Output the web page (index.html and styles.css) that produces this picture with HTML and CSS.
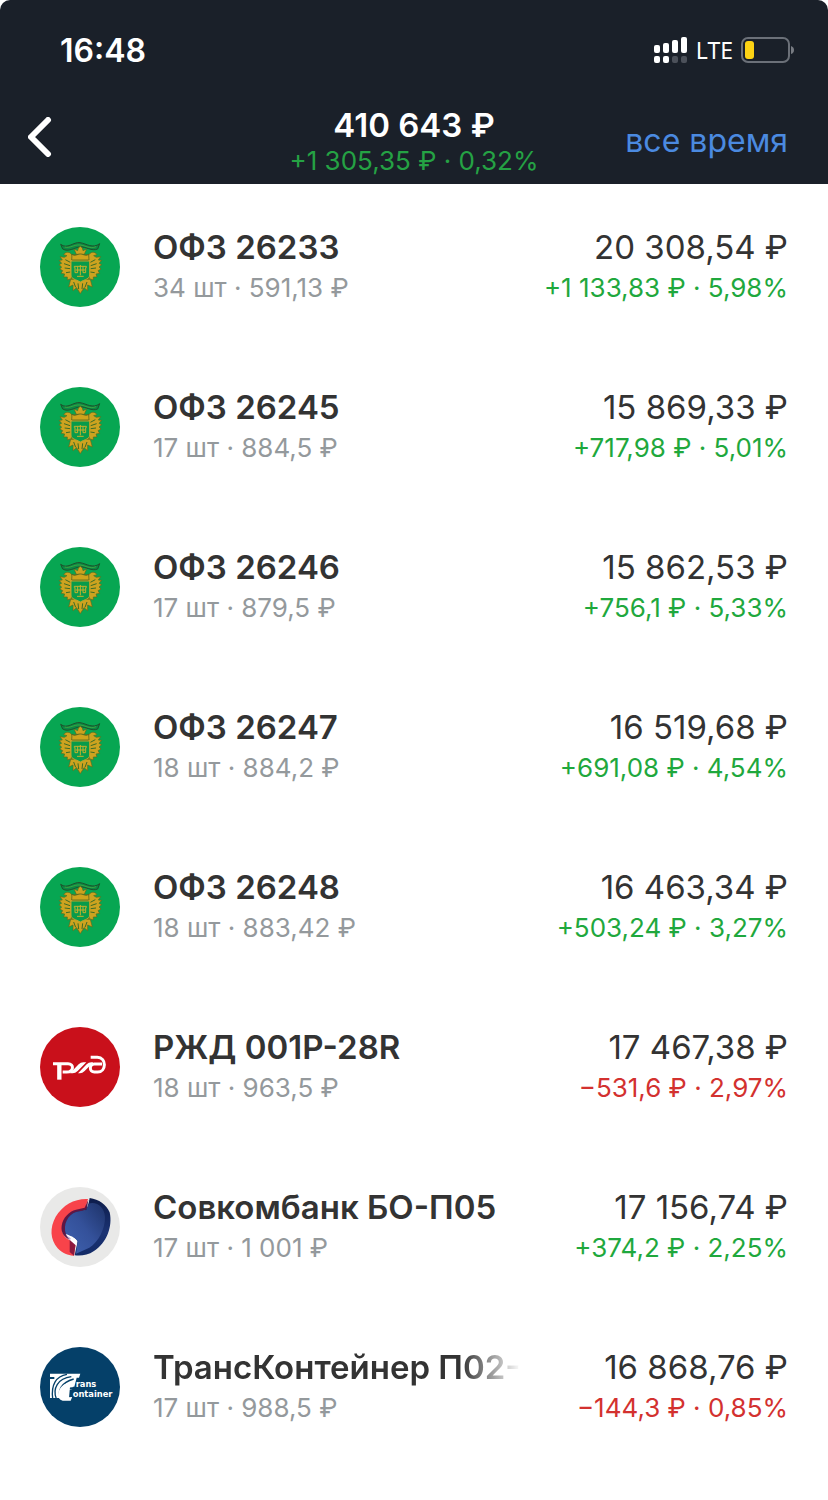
FILE: index.html
```html
<!DOCTYPE html>
<html lang="ru">
<head>
<meta charset="utf-8">
<meta name="viewport" content="width=device-width, initial-scale=1">
<title>Портфель</title>
<link rel="stylesheet" href="styles.css">
</head>
<body>
<svg class="defs" aria-hidden="true">
  <symbol id="logo-ofz" viewBox="30 30 240 240">
    <circle cx="150" cy="150" r="120" fill="#07a652"/>
    <path d="M92 82C112 98 130 74 150 77S188 96 209 80L203 96C185 104 168 88 150 90S116 106 98 96Z" fill="#0a8a45" stroke="#1f4f2a" stroke-width="3"/>
    <path d="M104 90C120 95 132 82 150 84S180 97 198 89" fill="none" stroke="#58b03c" stroke-width="2"/>
    <path d="M110 112H192L196 170 180 190 168 212 151 226 134 212 122 190 106 170Z" fill="#5d7a22"/>
    <g fill="#cda31f" stroke="#5c6a1d" stroke-width="2">
      <path d="M128 118C122 102 106 103 101 113L111 116 103 121 90 119 97 129 87 130 95 139 87 143 95 150 89 156 98 161 93 169 104 171 101 180 112 180 112 189 124 185 128 130Z"/>
      <path d="M174 118C180 102 196 103 201 113L191 116 199 121 212 119 205 129 215 130 207 139 215 143 207 150 213 156 204 161 209 169 198 171 201 180 190 180 190 189 178 185 174 130Z"/>
      <path d="M139 112L132 96 143 101 145 93 151 88 157 93 159 101 170 96 163 112Z"/>
      <path d="M122 187L116 210 129 204 129 221 140 212 151 230 162 212 173 221 173 204 187 210 181 187Z"/>
    </g>
    <path d="M106 128L121 136M102 140L120 146M104 153L120 155M108 167L121 165M196 128L181 136M200 140L182 146M198 153L182 155M194 167L181 165M131 195L137 211M144 199L146 216M158 199L156 216M171 195L165 211" stroke="#3d6b26" stroke-width="3" fill="none"/>
    <path d="M126 111C134 120 141 111 151 111S168 120 176 111L177 129H125Z" fill="#d0a31c" stroke="#415d22" stroke-width="2"/>
    <path d="M123 132H179V174C179 186 165 187 151 195C137 187 123 186 123 174Z" fill="#079b4b" stroke="#c2a52a" stroke-width="3"/>
    <path d="M133 152V148H169V152M135 151V167H143V148M151 144V175M159 148V167H167V151M137 159H165M141 178H161" fill="none" stroke="#c5b22c" stroke-width="3"/>
  </symbol>
</svg>

<header class="header">
  <div class="status">
    <time class="clock">16:48</time>
    <div class="signals">
      <svg class="cell" viewBox="0 0 34 27" aria-hidden="true">
        <g fill="#fff"><rect x="0" y="8" width="6" height="8" rx="2"/><rect x="9" y="6" width="6" height="10" rx="2"/><rect x="18" y="3" width="6" height="13" rx="2"/><rect x="27" y="0" width="6" height="16" rx="2"/><rect x="0" y="19" width="6" height="7" rx="2"/><rect x="9" y="19" width="6" height="7" rx="2"/></g>
        <g fill="#4c515a"><rect x="18" y="19" width="6" height="7" rx="2"/><rect x="27" y="19" width="6" height="7" rx="2"/></g>
      </svg>
      <span class="network">LTE</span>
      <svg class="battery" viewBox="0 0 54 26" aria-hidden="true">
        <rect x="1" y="1" width="47" height="24" rx="6" fill="none" stroke="#6b7078" stroke-width="2"/>
        <rect x="4" y="4" width="9" height="18" rx="3" fill="#fdd314"/>
        <path d="M50 9Q53 10 53 13T50 17Z" fill="#777b82"/>
      </svg>
    </div>
  </div>
  <nav class="nav">
    <button class="back" type="button" aria-label="Назад">
      <svg viewBox="0 0 24 40" aria-hidden="true"><path d="M20 3L3 20 20 37" fill="none" stroke="#fff" stroke-width="6" stroke-linecap="round" stroke-linejoin="round"/></svg>
    </button>
    <div class="total">
      <h1 class="total-sum">410 643 ₽</h1>
      <p class="total-gain">+1 305,35 ₽ · 0,32%</p>
    </div>
    <button class="period" type="button">все время</button>
  </nav>
</header>

<main>
  <ul class="list">
    <li class="row">
      <svg class="logo" aria-hidden="true"><use href="#logo-ofz"/></svg>
      <div class="info"><h2 class="name">ОФЗ 26233</h2><p class="qty">34 шт · 591,13 ₽</p></div>
      <div class="worth"><p class="sum">20 308,54 ₽</p><p class="gain">+1 133,83 ₽ · 5,98%</p></div>
    </li>
    <li class="row">
      <svg class="logo" aria-hidden="true"><use href="#logo-ofz"/></svg>
      <div class="info"><h2 class="name">ОФЗ 26245</h2><p class="qty">17 шт · 884,5 ₽</p></div>
      <div class="worth"><p class="sum">15 869,33 ₽</p><p class="gain">+717,98 ₽ · 5,01%</p></div>
    </li>
    <li class="row">
      <svg class="logo" aria-hidden="true"><use href="#logo-ofz"/></svg>
      <div class="info"><h2 class="name">ОФЗ 26246</h2><p class="qty">17 шт · 879,5 ₽</p></div>
      <div class="worth"><p class="sum">15 862,53 ₽</p><p class="gain">+756,1 ₽ · 5,33%</p></div>
    </li>
    <li class="row">
      <svg class="logo" aria-hidden="true"><use href="#logo-ofz"/></svg>
      <div class="info"><h2 class="name">ОФЗ 26247</h2><p class="qty">18 шт · 884,2 ₽</p></div>
      <div class="worth"><p class="sum">16 519,68 ₽</p><p class="gain">+691,08 ₽ · 4,54%</p></div>
    </li>
    <li class="row">
      <svg class="logo" aria-hidden="true"><use href="#logo-ofz"/></svg>
      <div class="info"><h2 class="name">ОФЗ 26248</h2><p class="qty">18 шт · 883,42 ₽</p></div>
      <div class="worth"><p class="sum">16 463,34 ₽</p><p class="gain">+503,24 ₽ · 3,27%</p></div>
    </li>
    <li class="row">
      <svg class="logo" viewBox="30 30 240 240" aria-hidden="true">
        <circle cx="150" cy="150" r="120" fill="#c9101b"/>
        <g fill="none" stroke="#fff" stroke-width="9">
          <path d="M69 140H114C133 140 132 165 110 165H98"/>
          <path d="M88 138V188" stroke-width="13"/>
          <path d="M182 121H202C231 121 229 165 203 165H193C177 165 177 141 193 141H216"/>
        </g>
        <path fill="#fff" d="M120 169L146 142Q152 136 160 136H169L143 162Q136 169 128 169ZM144 169L170 142Q176 136 184 136H190L164 162Q157 169 150 169Z"/>
      </svg>
      <div class="info"><h2 class="name">РЖД 001P-28R</h2><p class="qty">18 шт · 963,5 ₽</p></div>
      <div class="worth"><p class="sum">17 467,38 ₽</p><p class="gain loss">−531,6 ₽ · 2,97%</p></div>
    </li>
    <li class="row">
      <svg class="logo" viewBox="30 30 240 240" aria-hidden="true">
        <defs>
          <linearGradient id="sov-blue" x1="0" y1="1" x2="1" y2="0">
            <stop offset="0" stop-color="#3f62b0"/><stop offset=".5" stop-color="#34519a"/><stop offset="1" stop-color="#1d3268"/>
          </linearGradient>
          <linearGradient id="sov-rim" x1="0" y1="0" x2="0" y2="1">
            <stop offset="0" stop-color="#0d1c4a"/><stop offset=".6" stop-color="#1b3373"/><stop offset="1" stop-color="#132a66"/>
          </linearGradient>
        </defs>
        <circle cx="150" cy="150" r="120" fill="#e9e9e8"/>
        <path d="M174 66C135 64 99 83 77 119C59 152 60 186 83 214C98 229 117 237 132 236L137 200 120 190C103 183 94 166 97 147C101 125 119 108 143 105L165 98Z" fill="#f8434a"/>
        <path d="M175 68L170 99 145 106C114 112 104 140 110 172L119 188C103 181 92 166 95 146C99 122 117 103 138 98L164 92Z" fill="#5f1744"/>
        <path d="M119 188L137 200 132 236 119 225Z" fill="#8d193e"/>
        <path d="M179 63C207 67 229 82 239 106C249 149 229 200 192 222C173 235 154 237 134 235L143 193C134 180 119 178 108 172C98 142 114 113 138 105L166 100 174 88Z" fill="url(#sov-rim)"/>
        <path d="M175 80C202 72 223 92 225 119C226 154 206 194 178 212L138 230 143 193C134 180 119 178 108 172C98 142 114 113 138 105L169 99Z" fill="url(#sov-blue)"/>
        <path d="M107 171C120 176 134 180 141 192L139 206 122 191Z" fill="#fff"/>
        <path d="M107 173L122 184 120 190Z" fill="#c5a9d8"/>
      </svg>
      <div class="info"><h2 class="name">Совкомбанк БО-П05</h2><p class="qty">17 шт · 1 001 ₽</p></div>
      <div class="worth"><p class="sum">17 156,74 ₽</p><p class="gain">+374,2 ₽ · 2,25%</p></div>
    </li>
    <li class="row">
      <svg class="logo" viewBox="30 30 240 240" role="img" aria-label="TransContainer">
        <circle cx="150" cy="150" r="120" fill="#054069"/>
        <path d="M60 110H151L147 122H140L133 149H120L117 183H60V126H73V120H60Z" fill="#fff"/>
        <path d="M68 184C63 145 77 117 111 112M79 185C67 155 83 124 124 119M92 187C81 160 94 137 131 126" fill="none" stroke="#054069" stroke-width="4"/>
        <path d="M128 157C105 159 98 176 113 181L127 180 122 191H98C78 187 81 157 101 143C110 137 122 137 132 139L128 151C109 150 96 163 97 174C102 163 113 157 128 157Z" fill="#fff"/>
        <path d="M129 154L125 190 150 190 150 154Z" fill="#054069"/>
        <text class="logo-word" x="137" y="150">rans</text>
        <text class="logo-word" x="128" y="180">ontainer</text>
      </svg>
      <div class="info"><h2 class="name name-fade">ТрансКонтейнер П02-</h2><p class="qty">17 шт · 988,5 ₽</p></div>
      <div class="worth"><p class="sum">16 868,76 ₽</p><p class="gain loss">−144,3 ₽ · 0,85%</p></div>
    </li>
  </ul>
</main>
</body>
</html>
```
FILE: styles.css
```css
* { box-sizing: border-box; }

body {
  margin: 0;
  background: #fff;
  color: #333;
  font-family: Inter, "Liberation Sans", sans-serif;
}

h1, h2, p, ul { margin: 0; padding: 0; }

.defs {
  position: absolute;
  width: 0;
  height: 0;
}

.header {
  background: #1a2029;
  color: #fff;
  border-radius: 10px 10px 0 0;
}

.status {
  display: flex;
  align-items: center;
  justify-content: space-between;
  height: 100px;
  padding: 0 33px 0 60px;
}

.clock {
  font-size: 32px;
  font-weight: 600;
}

.signals {
  display: flex;
  align-items: center;
  gap: 8px;
}

.cell { width: 34px; height: 27px; }

.network {
  font-family: "Noto Sans", sans-serif;
  font-size: 23px;
  line-height: 28px;
}

.battery { width: 54px; height: 26px; }

.nav {
  display: grid;
  grid-template-columns: 1fr auto 1fr;
  align-items: center;
  min-height: 84px;
  padding: 0 28px;
}

.back {
  justify-self: start;
  padding: 0 0 10px;
  border: 0;
  background: none;
}

.back svg {
  display: block;
  width: 24px;
  height: 40px;
}

.total { text-align: center; }

.total-sum {
  font-size: 33px;
  font-weight: 600;
  line-height: 38px;
}

.total-gain {
  color: #25a244;
  font-size: 26px;
  line-height: 34px;
}

.period {
  justify-self: end;
  padding: 0 12px 4px 0;
  border: 0;
  background: none;
  color: #4b8ae0;
  font: inherit;
  font-size: 32px;
}

.list {
  padding-top: 3px;
  list-style: none;
}

.row {
  display: flex;
  align-items: center;
  gap: 33px;
  min-height: 160px;
  padding: 0 40px;
}

.logo {
  flex: none;
  width: 80px;
  height: 80px;
}

.logo-word {
  fill: #fff;
  font-family: "DejaVu Sans", sans-serif;
  font-size: 25px;
  font-weight: 700;
}

.info {
  flex: 1;
  min-width: 0;
}

.name {
  font-size: 33px;
  font-weight: 600;
  line-height: 42px;
  white-space: nowrap;
  overflow: hidden;
}

.name-fade {
  width: fit-content;
  max-width: 100%;
  -webkit-mask-image: linear-gradient(to left, transparent, #000 60px);
  mask-image: linear-gradient(to left, transparent, #000 60px);
}

.qty {
  color: #94999c;
  font-size: 26px;
  line-height: 40px;
}

.worth {
  text-align: right;
  white-space: nowrap;
}

.sum {
  font-size: 33px;
  line-height: 42px;
}

.gain {
  color: #1fa83d;
  font-size: 26px;
  line-height: 40px;
}

.loss { color: #d3312f; }
```
